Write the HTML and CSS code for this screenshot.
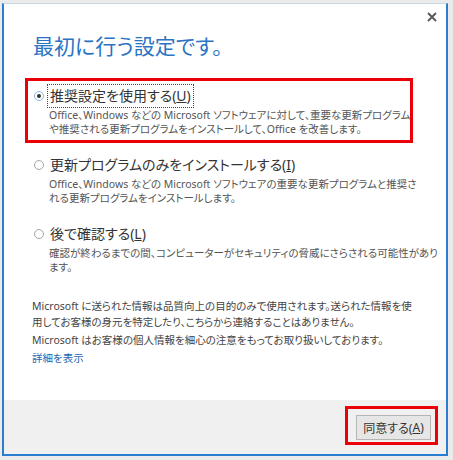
FILE: index.html
```html
<!DOCTYPE html>
<html lang="ja">
<head>
<meta charset="utf-8">
<title>最初に行う設定です。</title>
<link rel="stylesheet" href="styles.css">
</head>
<body>
<div class="dialog">
  <div class="topbar">
    <svg class="close" width="10" height="10" viewBox="0 0 10 10"><path d="M1 1 L9 9 M9 1 L1 9" stroke="#555" stroke-width="1.8" fill="none"/></svg>
  </div>
  <h1 class="title">最初に行う設定です。</h1>

  <div class="option highlight">
    <span class="radio checked"></span>
    <span class="label focus">推奨設定を使用する(<u>U</u>)</span>
    <p class="desc">Office、Windows などの Microsoft ソフトウェアに対して、重要な更新プログラム<br>や推奨される更新プログラムをインストールして、Office を改善します。</p>
  </div>

  <div class="option">
    <span class="radio"></span>
    <span class="label">更新プログラムのみをインストールする(<u>I</u>)</span>
    <p class="desc">Office、Windows などの Microsoft ソフトウェアの重要な更新プログラムと推奨さ<br>れる更新プログラムをインストールします。</p>
  </div>

  <div class="option">
    <span class="radio"></span>
    <span class="label">後で確認する(<u>L</u>)</span>
    <p class="desc">確認が終わるまでの間、コンピューターがセキュリティの脅威にさらされる可能性があり<br>ます。</p>
  </div>

  <div class="privacy">
    <p>Microsoft に送られた情報は品質向上の目的のみで使用されます。送られた情報を使<br>用してお客様の身元を特定したり、こちらから連絡することはありません。</p>
    <p>Microsoft はお客様の個人情報を細心の注意をもってお取り扱いしております。</p>
    <p class="link">詳細を表示</p>
  </div>

  <div class="footer">
    <div class="btnmark">
      <span class="button">同意する(<u>A</u>)</span>
    </div>
  </div>
</div>
</body>
</html>
```
FILE: styles.css
```css
html, body {
  margin: 0;
  padding: 0;
  background: #ebebeb;
}
body {
  width: 453px;
  height: 460px;
  overflow: hidden;
  font-family: "Noto Sans", "Noto Sans CJK JP", sans-serif;
  font-feature-settings: "palt";
}
.dialog {
  margin: 3px 0 0 2px;
  width: 442px;
  height: 450px;
  background: #fff;
  border: 2px solid #2b7dd0;
  border-top: 1px solid #c9d6e3;
  display: flex;
  flex-direction: column;
}
.topbar {
  height: 26px;
  display: flex;
  justify-content: flex-end;
  align-items: center;
  padding-right: 9px;
}
.close { display: block; }
.title {
  margin: 1px 0 0 29px;
  font-size: 21px;
  line-height: 28px;
  font-weight: normal;
  color: #2a74c3;
  font-family: "Noto Sans CJK JP", sans-serif;
}
.option {
  margin: 4px 33px 0 21px;
  border: 3px solid transparent;
  padding: 3px 0 4px 6px;
  display: grid;
  grid-template-columns: 13px 1fr;
  align-items: center;
}
.option.highlight {
  margin-top: 19px;
  border-color: #ec0008;
}
.radio {
  width: 8px;
  height: 8px;
  border: 1px solid #a6a6a6;
  border-radius: 50%;
  background: #fff;
  display: flex;
  align-items: center;
  justify-content: center;
}
.radio.checked {
  border-color: #8fb4dc;
}
.radio.checked::after {
  content: "";
  width: 4px;
  height: 4px;
  border-radius: 50%;
  background: #333;
}
.label {
  justify-self: start;
  font-size: 14px;
  line-height: 22px;
  color: #333;
  padding: 0 2px;
  border: 1px dotted transparent;
  white-space: nowrap;
}
.label.focus {
  border-color: #444;
}
.desc {
  grid-column: 2;
  margin: 0;
  padding-left: 2px;
  font-size: 10.5px;
  line-height: 14px;
  color: #555;
  white-space: nowrap;
}
.privacy {
  margin: 17px 0 0 28px;
  font-size: 10.5px;
  line-height: 16px;
  color: #444;
  white-space: nowrap;
}
.privacy p {
  margin: 0 0 2px 0;
}
.privacy .link {
  color: #2566b0;
}
.footer {
  margin-top: auto;
  height: 48px;
  background: #f0f0f0;
  display: flex;
  justify-content: flex-end;
  align-items: flex-start;
  padding: 6px 8px 0 0;
}
.btnmark {
  border: 3px solid #ec0008;
  padding: 6px 4px 2px 8px;
}
.button {
  display: flex;
  align-items: center;
  justify-content: center;
  width: 73px;
  height: 23px;
  border: 1px solid #b5b5b5;
  background: #e6e6e6;
  font-size: 12px;
  color: #333;
}
```
